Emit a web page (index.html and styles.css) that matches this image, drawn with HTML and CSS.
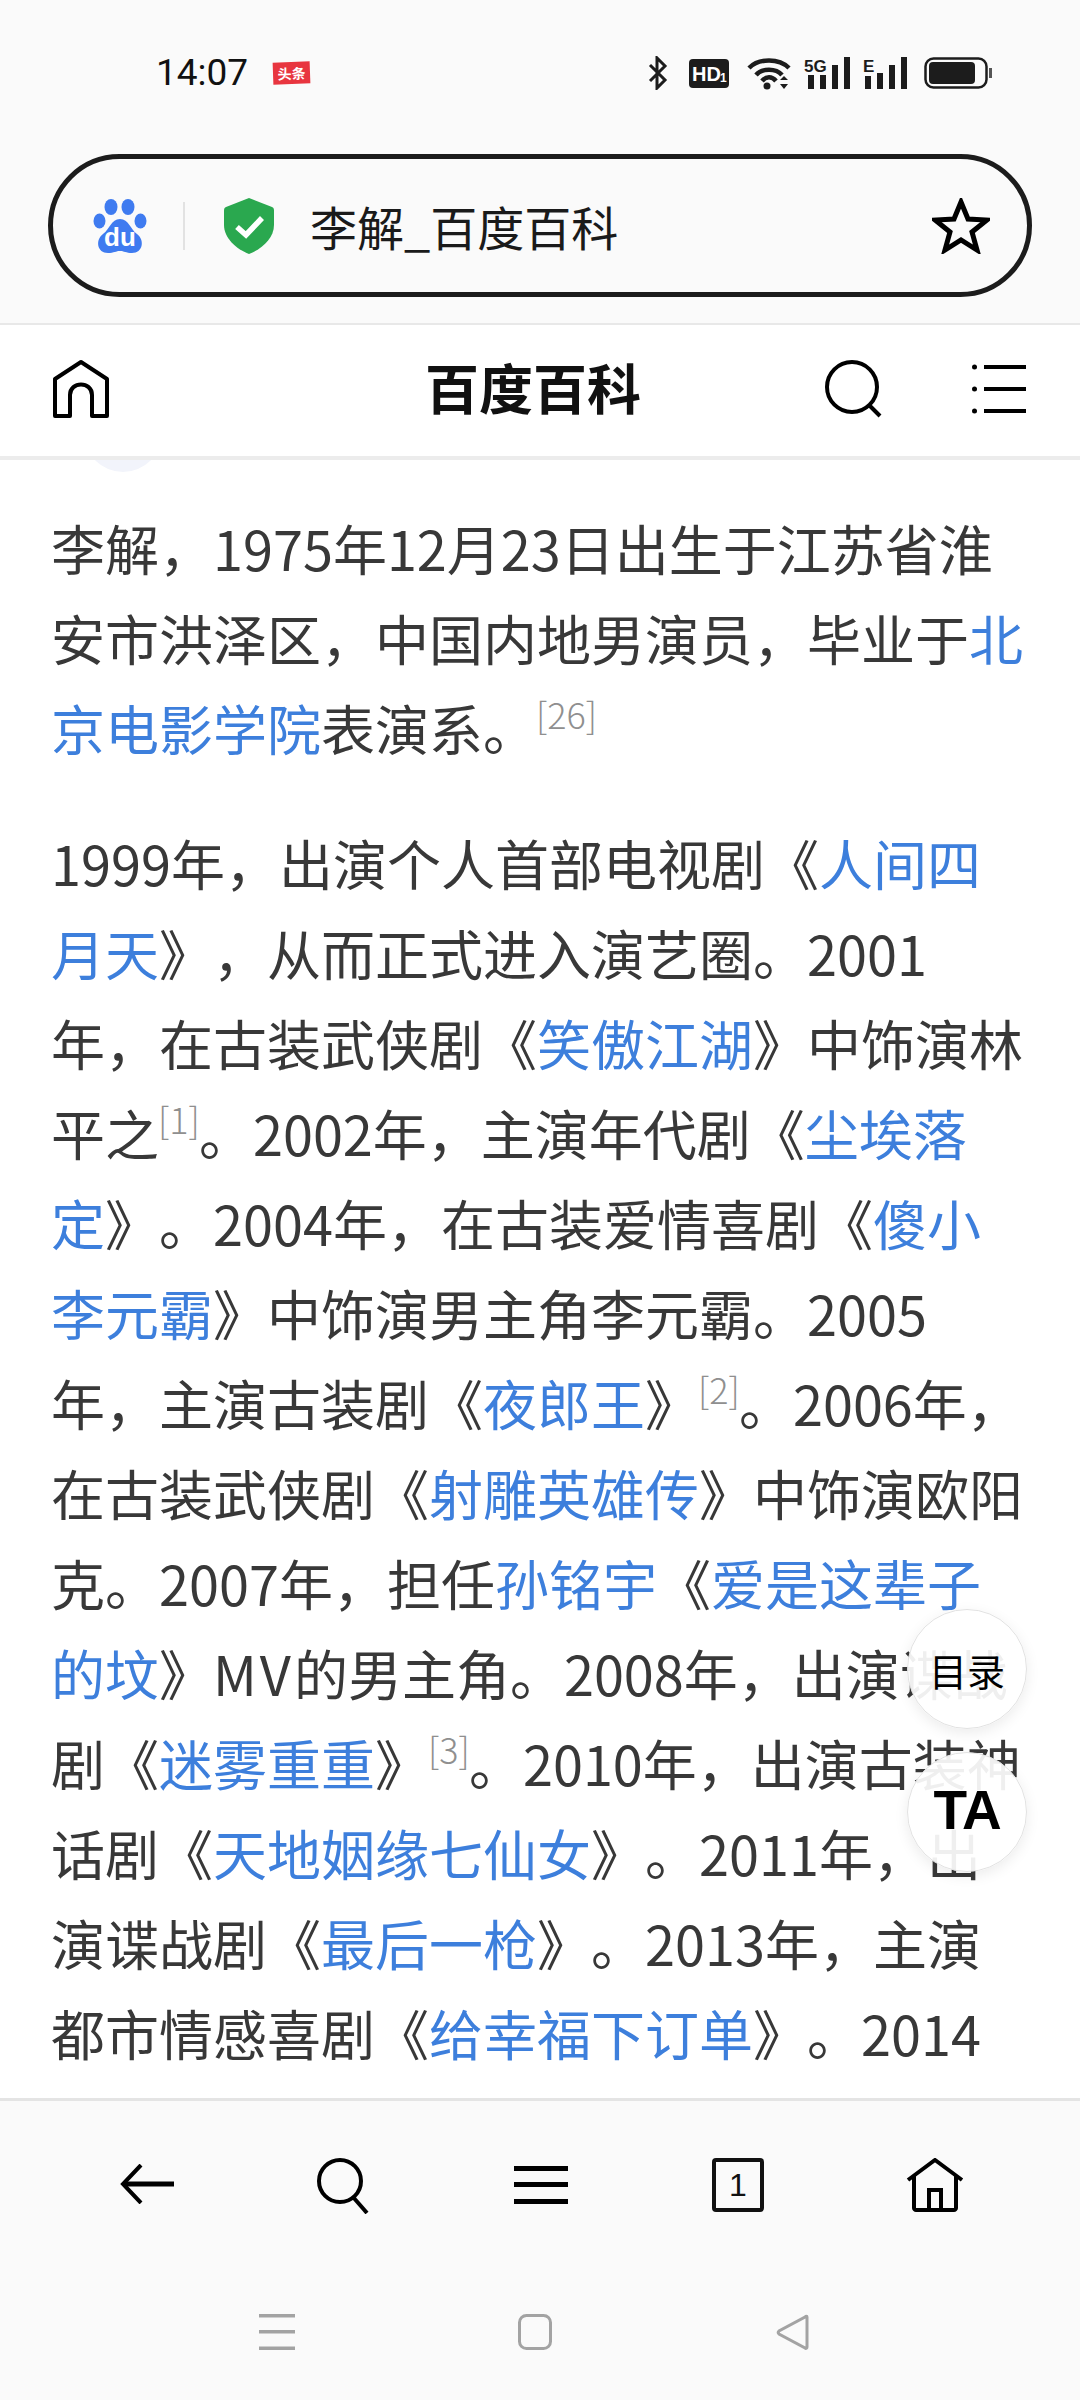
FILE: index.html
```html
<!DOCTYPE html>
<html lang="zh">
<head>
<meta charset="utf-8">
<title>李解_百度百科</title>
<link rel="stylesheet" href="styles.css">
</head>
<body>
<div class="phone">
  <div class="status">
    <span class="time">14:07</span>
    <span class="tag">头条</span>
    <div class="status-icons">
      <svg class="i-bt" width="20" height="34" viewBox="0 0 20 34"><path d="M2 9 L17 24 L9 32 V2 L17 10 L2 25" fill="none" stroke="#1c1c1c" stroke-width="3"/></svg>
      <svg class="i-hd" width="40" height="29" viewBox="0 0 40 29"><rect width="40" height="29" rx="4" fill="#1c1c1c"/><text x="3" y="22" class="hd-t">HD</text><text x="31" y="23" class="hd-s">1</text></svg>
      <svg class="i-wifi" width="46" height="34" viewBox="0 0 46 34"><g fill="none" stroke="#1c1c1c" stroke-width="4.500"><path d="M2 12 C12 2 32 2 42 12"/><path d="M9 19 C15 12 29 12 35 19"/><path d="M15 25 C19 20 25 20 29 25"/></g><circle cx="20" cy="30" r="3.500" fill="#1c1c1c"/><path d="M33 24 L37 20 L41 24 Z M33 28 L41 28 L37 33 Z" fill="#1c1c1c"/></svg>
      <svg class="i-sig" width="46" height="34" viewBox="0 0 46 34"><text x="0" y="16" class="sig-t">5G</text><g fill="#1c1c1c"><rect x="4" y="19" width="6" height="14"/><rect x="16" y="19" width="6" height="14"/><rect x="28" y="9" width="6" height="24"/><rect x="40" y="1" width="6" height="32"/></g></svg>
      <svg class="i-sig2" width="46" height="34" viewBox="0 0 46 34"><text x="0" y="16" class="sig-t">E</text><g fill="#1c1c1c"><rect x="2" y="20" width="6" height="13"/><rect x="14" y="17" width="6" height="16"/><rect x="26" y="9" width="6" height="24"/><rect x="38" y="1" width="6" height="32"/></g></svg>
      <svg class="i-bat" width="68" height="32" viewBox="0 0 68 32"><rect x="1.500" y="1.500" width="61" height="29" rx="8" fill="none" stroke="#1c1c1c" stroke-width="2.500"/><rect x="5" y="5" width="46" height="22" rx="4" fill="#1c1c1c"/><rect x="65" y="11" width="3" height="10" fill="#555"/></svg>
    </div>
  </div>

  <div class="addr-wrap">
    <div class="addr">
      <svg class="paw" width="54" height="56" viewBox="0 0 54 56"><g fill="#3f7bf0"><ellipse cx="18" cy="9" rx="6.500" ry="8"/><ellipse cx="35" cy="9" rx="6.500" ry="8"/><ellipse cx="6.500" cy="23" rx="6" ry="7.500"/><ellipse cx="47.500" cy="23" rx="6" ry="7.500"/><path d="M27 21 C36 21 37 31 44 36 C52 42 50 55 39 55 C33 55 31 53 27 53 C23 53 21 55 15 55 C4 55 2 42 10 36 C17 31 18 21 27 21 Z"/></g><text x="27" y="48" class="du">du</text></svg>
      <span class="addr-div"></span>
      <svg class="shield" width="50" height="56" viewBox="0 0 50 56"><path d="M25 0 L48 9 C50 10 50 11 50 14 V27 C50 40 38 51 25 56 C12 51 0 40 0 27 V14 C0 11 0 10 2 9 Z" fill="#2aa84f"/><path d="M13 29 L22 37 L38 20" fill="none" stroke="#fff" stroke-width="5.500"/></svg>
      <span class="addr-text">李解_百度百科</span>
      <svg class="star" width="58" height="56" viewBox="0 0 58 56"><path d="M29 4 L36 21 L55 22 L40 34 L45 52 L29 42 L13 52 L18 34 L3 22 L22 21 Z" fill="none" stroke="#000" stroke-width="5"/></svg>
    </div>
  </div>

  <div class="site-head">
    <svg class="h-home" width="58" height="60" viewBox="0 0 58 60"><path d="M3 57 V20 L29 3 L55 20 V57 H40 V36 C40 22 18 22 18 36 V57 Z" fill="none" stroke="#000" stroke-width="4" stroke-linejoin="round"/></svg>
    <span class="site-title">百度百科</span>
    <svg class="h-search" width="58" height="58" viewBox="0 0 58 58"><circle cx="27" cy="27" r="25" fill="none" stroke="#000" stroke-width="4"/><path d="M44 45 L55 56" stroke="#000" stroke-width="4"/></svg>
    <svg class="h-menu" width="54" height="50" viewBox="0 0 54 50"><g fill="#000"><circle cx="2.500" cy="3" r="2.500"/><circle cx="2.500" cy="25" r="2.500"/><circle cx="2.500" cy="47" r="2.500"/><rect x="12" y="1" width="42" height="4"/><rect x="12" y="23" width="42" height="4"/><rect x="12" y="45" width="42" height="4"/></g></svg>
  </div>

  <main class="content">
    <div class="avatar-edge"></div>
    <p class="para">李解，1975年12月23日出生于江苏省淮<br>安市洪泽区，中国内地男演员，毕业于<a>北</a><br><a>京电影学院</a>表演系。<sup>[26]</sup></p>
    <p class="para">1999年，出演个人首部电视剧《<a>人间四</a><br><a>月天</a>》，从而正式进入演艺圈。2001<br>年，在古装武侠剧《<a>笑傲江湖</a>》中饰演林<br>平之<sup>[1]</sup>。2002年，主演年代剧《<a>尘埃落</a><br><a>定</a>》。2004年，在古装爱情喜剧《<a>傻小</a><br><a>李元霸</a>》中饰演男主角李元霸。2005<br>年，主演古装剧《<a>夜郎王</a>》<sup>[2]</sup>。2006年，<br>在古装武侠剧《<a>射雕英雄传</a>》中饰演欧阳<br>克。2007年，担任<a>孙铭宇</a>《<a>爱是这辈子</a><br><a>的坟</a>》<span class="mv">MV</span>的男主角。2008年，出演谍战<br>剧《<a>迷雾重重</a>》<sup>[3]</sup>。2010年，出演古装神<br>话剧《<a>天地姻缘七仙女</a>》。2011年，出<br>演谍战剧《<a>最后一枪</a>》。2013年，主演<br>都市情感喜剧《<a>给幸福下订单</a>》。2014</p>
    <div class="fab fab-toc">目录</div>
    <div class="fab fab-ta">TA</div>
  </main>

  <nav class="toolbar">
    <svg class="tb-back" width="54" height="40" viewBox="0 0 54 40"><path d="M21 1 L3 20 L21 39" fill="none" stroke="#000" stroke-width="4"/><rect x="3" y="17.500" width="51" height="5"/></svg>
    <svg width="54" height="56" viewBox="0 0 54 56"><circle cx="23" cy="23" r="21" fill="none" stroke="#000" stroke-width="4"/><path d="M36 39 L50 55" stroke="#000" stroke-width="4"/></svg>
    <svg class="tb-menu" width="54" height="38" viewBox="0 0 54 38"><g fill="#000"><rect width="54" height="5"/><rect y="16" width="54" height="5"/><rect y="33" width="54" height="5"/></g></svg>
    <svg width="52" height="54" viewBox="0 0 52 54"><rect x="2" y="2" width="48" height="50" rx="2" fill="none" stroke="#111" stroke-width="4"/><text x="26" y="38" class="tab-n">1</text></svg>
    <svg width="58" height="54" viewBox="0 0 58 54"><path d="M2 22 L29 2 L56 22" fill="none" stroke="#000" stroke-width="4"/><path d="M8 18 V50 C8 51 9 52 10 52 H48 C49 52 50 51 50 50 V18" fill="none" stroke="#000" stroke-width="4"/><path d="M23 52 V32 H35 V52" fill="none" stroke="#000" stroke-width="4"/></svg>
  </nav>
  <nav class="sysnav">
    <svg width="36" height="36" viewBox="0 0 36 36"><g fill="#a3a3a3"><rect width="36" height="3.500"/><rect y="16" width="36" height="3.500"/><rect y="32.500" width="36" height="3.500"/></g></svg>
    <svg width="34" height="36" viewBox="0 0 34 36"><rect x="1.500" y="1.500" width="31" height="33" rx="7" fill="none" stroke="#a3a3a3" stroke-width="3"/></svg>
    <svg width="34" height="36" viewBox="0 0 34 36"><path d="M31 3 C31 2 30 2 29 3 L3 17 C2 18 2 19 3 20 L29 34 C30 35 31 34 31 33 Z" fill="none" stroke="#a3a3a3" stroke-width="3"/></svg>
  </nav>
</div>
</body>
</html>
```

FILE: styles.css
```css
* { box-sizing: border-box; }
html, body { margin: 0; padding: 0; }
body { font-family: "Noto Sans CJK SC", "Noto Sans", sans-serif; background: #fafafa; text-spacing-trim: space-all; }
.phone { width: 1080px; height: 2400px; display: flex; flex-direction: column; background: #fafafa; overflow: hidden; }

.status { height: 154px; flex: none; display: flex; align-items: flex-start; padding: 50px 0 0 156px; }
.time { font-family: Roboto, sans-serif; font-size: 37px; line-height: 46px; color: #111; width: 117px; }
.tag { margin-top: 12px; width: 37px; height: 22px; background: #e8353f; color: #fff; font-size: 14px; font-weight: 700; line-height: 22px; text-align: center; transform: rotate(-2deg); }
.status-icons { margin-left: auto; margin-right: 88px; display: flex; align-items: center; height: 46px; }
.i-bt { margin-right: 21px; }
.i-hd { margin-right: 18px; }
.i-wifi { margin-right: 11px; }
.i-sig { margin-right: 13px; }
.i-sig2 { margin-right: 15px; }
.hd-t { font-family: "Liberation Sans", sans-serif; font-size: 20px; font-weight: 700; fill: #fff; }
.hd-s { font-family: "Liberation Sans", sans-serif; font-size: 12px; font-weight: 700; fill: #fff; }
.sig-t { font-family: "Liberation Sans", sans-serif; font-size: 17px; font-weight: 700; fill: #1c1c1c; }

.addr-wrap { flex: none; height: 171px; padding: 0 48px; border-bottom: 2px solid #e8e8e8; }
.addr { height: 143px; border: 5px solid #1c1c1c; border-radius: 72px; display: flex; align-items: center; padding: 0 37px 0 40px; }
.paw { flex: none; }
.du { font-family: "Liberation Sans", sans-serif; font-size: 26px; font-weight: 700; fill: #fff; text-anchor: middle; }
.addr-div { flex: none; width: 2px; height: 48px; background: #e2e2e2; margin: 0 39px 0 36px; }
.shield { flex: none; }
.addr-text { font-size: 47px; line-height: 58px; color: #1a1a1a; margin-left: 36px; white-space: nowrap; font-weight: 400; }
.star { flex: none; margin-left: auto; }

.site-head { flex: none; height: 135px; background: #fff; position: relative; display: flex; align-items: center; padding: 0 54px 4px 52px; border-bottom: 4px solid #ececec; }
.site-title { position: absolute; left: 0; right: 0; text-align: center; font-size: 54px; font-weight: 700; color: #111; line-height: 66px; top: 29px; padding-right: 14px; }
.h-search { margin-left: auto; margin-right: 89px; }

.content { flex: 1; min-height: 0; background: #fff; position: relative; overflow: hidden; padding: 43px 38px 0 51px; }
.avatar-edge { position: absolute; left: 84px; top: -66px; width: 78px; height: 78px; border-radius: 50%; background: #f2f4fb; }
.para { margin: 0 0 45px; font-size: 54px; line-height: 90px; color: #383838; white-space: nowrap; }
.para a { color: #3d7fdc; }
.para .mv { letter-spacing: 3px; }
.para sup { font-size: 36px; line-height: 0; color: #8f8f8f; vertical-align: baseline; position: relative; top: -22px; margin: 0 -1px; font-weight: 300; }

.fab { position: absolute; left: 907px; width: 120px; height: 120px; border-radius: 50%; background: rgba(255,255,255,0.92); border: 1px solid #e2e2e2; box-shadow: 0 4px 14px rgba(0,0,0,0.08); display: flex; align-items: center; justify-content: center; color: #000; }
.fab-toc { top: 1149px; font-size: 38px; font-weight: 400; }
.fab-ta { top: 1292px; font-family: "Liberation Sans", sans-serif; font-size: 55px; font-weight: 700; letter-spacing: -1px; padding-bottom: 4px; }

.toolbar { flex: none; height: 198px; border-top: 3px solid #e4e4e4; display: grid; grid-template-columns: repeat(5, 197px); padding: 57px 48px 0; justify-items: center; align-items: start; background: #fafafa; }
.tb-back { margin-top: 6px; }
.tb-menu { margin-top: 8px; }
.tab-n { font-family: "Liberation Sans", sans-serif; font-size: 32px; fill: #111; text-anchor: middle; }
.sysnav { flex: none; height: 104px; display: grid; grid-template-columns: repeat(3, 258px); padding: 18px 0 0 148px; justify-items: center; align-items: start; }
```
